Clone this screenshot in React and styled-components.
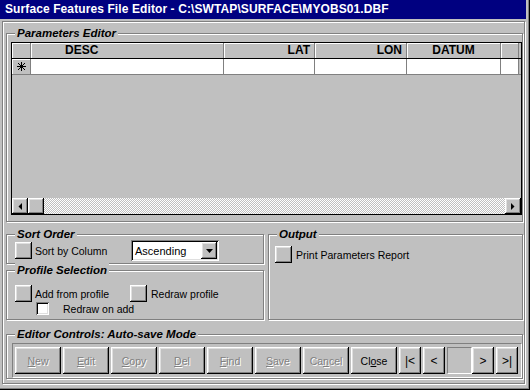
import React from "react";
import styled, { createGlobalStyle } from "styled-components";

const GlobalStyle = createGlobalStyle`
  html, body { margin: 0; padding: 0; background: #c0c0c0; }
  body { font-family: "Liberation Sans", Arial, sans-serif; }
`;

const raised = `
  box-shadow: inset -1px -1px 0 #000, inset 1px 1px 0 #fff,
    inset -2px -2px 0 #808080, inset 2px 2px 0 #dfdfdf;
`;

const Window = styled.div`
  width: 530px;
  height: 390px;
  box-sizing: border-box;
  background: #c0c0c0;
  display: flex;
  flex-direction: column;
  box-shadow: inset -1px -1px 0 #000, inset -2px -2px 0 #808080;
  font-family: "Liberation Sans", Arial, sans-serif;
  font-size: 10.5px;
  color: #000;
`;

const TitleBar = styled.div`
  width: 526px;
  height: 19px;
  box-sizing: border-box;
  padding-left: 5px;
  background: #000080;
  color: #fff;
  font-weight: bold;
  font-size: 12px;
  letter-spacing: 0.1px;
  line-height: 19px;
  white-space: nowrap;
`;

const Frame = styled.div`
  margin: 2px 0 0 2px;
  width: 523px;
  height: 363px;
  box-sizing: border-box;
  border: 1px solid #808080;
  box-shadow: inset 1px 1px 0 #fff, 1px 1px 0 #fff;
  padding: 11px 1px 0 3px;
  display: flex;
  flex-direction: column;
`;

const Group = styled.div`
  position: relative;
  box-sizing: border-box;
  border: 1px solid #808080;
  box-shadow: inset 1px 1px 0 #fff, 1px 1px 0 #fff;
  height: ${p => (p.$h ? `${p.$h}px` : "auto")};
  margin-top: ${p => p.$mt || 0}px;
  padding: ${p => p.$pad || "0"};
  flex: ${p => p.$flex || "none"};
`;

const Legend = styled.span`
  position: absolute;
  left: 8px;
  top: -8px;
  padding: 0 2px;
  background: #c0c0c0;
  font-weight: bold;
  font-style: italic;
  font-size: 11.5px;
  line-height: 14px;
  white-space: nowrap;
`;

/* ---------- data grid ---------- */

const cols = "19px 193px 91px 92px 94px 18px";

const Grid = styled.div`
  height: 173px;
  box-sizing: border-box;
  border: 1px solid #000;
  display: flex;
  flex-direction: column;
  background: #c0c0c0;
`;

const GridRow = styled.div`
  display: grid;
  grid-template-columns: ${cols};
  height: 15px;
  border-bottom: 1px solid ${p => (p.$head ? "#000" : "#808080")};
`;

const HeadCell = styled.div`
  box-sizing: border-box;
  border-right: 1px solid #808080;
  box-shadow: inset 1px 1px 0 #fff;
  font-weight: bold;
  font-size: 12px;
  line-height: 15px;
  text-align: ${p => p.$align || "center"};
  padding: ${p => p.$pad || "0 4px"};
  white-space: nowrap;
`;

const Cell = styled.div`
  box-sizing: border-box;
  border-right: 1px solid #808080;
  background: ${p => (p.$sel ? "#c0c0c0" : "#fff")};
  box-shadow: ${p => (p.$sel ? "inset 1px 1px 0 #fff" : "none")};
  display: flex;
  align-items: center;
  justify-content: center;
`;

const Filler = styled.div`
  flex: 1;
`;

const HScroll = styled.div`
  display: flex;
  height: 16px;
`;

const ScrollBtn = styled.div`
  width: 16px;
  height: 16px;
  box-sizing: border-box;
  background: #c0c0c0;
  ${raised}
  display: flex;
  align-items: center;
  justify-content: center;
`;

const Track = styled.div`
  flex: 1;
  background: repeating-conic-gradient(#c0c0c0 0 25%, #fff 0 50%) 0 0 / 2px 2px;
`;

/* ---------- controls ---------- */

const LowerRow = styled.div`
  display: flex;
  gap: 4px;
  margin-top: 12px;
`;

const LeftCol = styled.div`
  width: 258px;
  display: flex;
  flex-direction: column;
  gap: 6px;
`;

const Line = styled.div`
  display: flex;
  align-items: center;
  height: ${p => p.$h || 17}px;
  padding-left: ${p => p.$indent || 0}px;
`;

const Toggle = styled.div`
  width: 17px;
  height: 17px;
  box-sizing: border-box;
  background: #c0c0c0;
  ${raised}
  flex: none;
`;

const Label = styled.span`
  margin-left: ${p => p.$ml || 3}px;
  width: ${p => (p.$w ? `${p.$w}px` : "auto")};
  white-space: nowrap;
`;

const Check = styled.div`
  width: 13px;
  height: 13px;
  box-sizing: border-box;
  background: #fff;
  box-shadow: inset 1px 1px 0 #808080, inset -1px -1px 0 #fff,
    inset 2px 2px 0 #000, inset -2px -2px 0 #dfdfdf;
  flex: none;
`;

const Combo = styled.div`
  width: 88px;
  height: 21px;
  box-sizing: border-box;
  background: #fff;
  box-shadow: inset 1px 1px 0 #808080, inset -1px -1px 0 #fff,
    inset 2px 2px 0 #000, inset -2px -2px 0 #dfdfdf;
  display: flex;
  align-items: center;
  padding: 2px 2px 2px 4px;
  font-size: 11px;
`;

const ComboText = styled.span`
  flex: 1;
`;

const ComboBtn = styled(ScrollBtn)`
  width: 16px;
  height: 17px;
`;

const ButtonBar = styled.div`
  display: flex;
  align-items: center;
  box-sizing: border-box;
  height: 35px;
  border: 1px solid;
  border-color: #808080 #fff #fff #808080;
  padding: 0 2px;
  gap: 2px;
`;

const Btn = styled.button`
  width: ${p => p.$w || 46}px;
  height: 27px;
  padding: 0;
  border: none;
  background: #c0c0c0;
  ${raised}
  font-family: "Liberation Sans", Arial, sans-serif;
  font-size: ${p => (p.$nav ? 12 : 10.5)}px;
  color: ${p => (p.disabled ? "#808080" : "#000")};
  text-shadow: ${p => (p.disabled ? "1px 1px 0 #fff" : "none")};
  flex: none;
`;

const Field = styled.div`
  width: 25px;
  height: 27px;
  box-sizing: border-box;
  border: 1px solid;
  border-color: #808080 #fff #fff #808080;
  margin-right: -2px;
  flex: none;
`;

const Star = () => (
  <svg width="9" height="9" viewBox="0 0 9 9">
    <g stroke="#000" strokeWidth="1" shapeRendering="crispEdges">
      <line x1="4.5" y1="0" x2="4.5" y2="9" />
      <line x1="0" y1="4.5" x2="9" y2="4.5" />
      <line x1="1" y1="1" x2="8" y2="8" />
      <line x1="8" y1="1" x2="1" y2="8" />
    </g>
  </svg>
);

const Arrow = ({ dir }) => {
  const pts = {
    left: "4,0 4,7 0.5,3.5",
    right: "0,0 0,7 3.5,3.5",
    down: "0,0 7,0 3.5,4",
  }[dir];
  const w = dir === "down" ? 7 : 4;
  const h = dir === "down" ? 4 : 7;
  return (
    <svg width={w} height={h} viewBox={`0 0 ${w} ${h}`}>
      <polygon points={pts} fill="#000" />
    </svg>
  );
};

const ulStyle = { textDecoration: "underline" };

const editButtons = [
  ["", "N", "ew"],
  ["", "E", "dit"],
  ["", "C", "opy"],
  ["", "D", "el"],
  ["", "F", "ind"],
  ["", "S", "ave"],
  ["Ca", "n", "cel"],
];

export default function App() {
  return (
    <>
      <GlobalStyle />
      <Window>
        <TitleBar>Surface Features File Editor - C:\SWTAP\SURFACE\MYOBS01.DBF</TitleBar>
        <Frame>
          <Group $h={189} $pad="8px 0 0 4px">
            <Legend>Parameters Editor</Legend>
            <Grid>
              <GridRow $head>
                <HeadCell />
                <HeadCell $align="left" $pad="0 0 0 34px">DESC</HeadCell>
                <HeadCell $align="right">LAT</HeadCell>
                <HeadCell $align="right">LON</HeadCell>
                <HeadCell>DATUM</HeadCell>
                <HeadCell />
              </GridRow>
              <GridRow>
                <Cell $sel>
                  <Star />
                </Cell>
                <Cell />
                <Cell />
                <Cell />
                <Cell />
                <Cell />
              </GridRow>
              <Filler />
              <HScroll>
                <ScrollBtn>
                  <Arrow dir="left" />
                </ScrollBtn>
                <ScrollBtn />
                <Track />
                <ScrollBtn>
                  <Arrow dir="right" />
                </ScrollBtn>
              </HScroll>
            </Grid>
          </Group>

          <LowerRow>
            <LeftCol>
              <Group $h={30} $pad="5px 0 0 8px">
                <Legend>Sort Order</Legend>
                <Line $h={21}>
                  <Toggle />
                  <Label $w={96}>Sort by Column</Label>
                  <Combo>
                    <ComboText>Ascending</ComboText>
                    <ComboBtn>
                      <Arrow dir="down" />
                    </ComboBtn>
                  </Combo>
                </Line>
              </Group>
              <Group $h={50} $pad="14px 0 0 8px">
                <Legend>Profile Selection</Legend>
                <Line>
                  <Toggle />
                  <Label $w={95}>Add from profile</Label>
                  <Toggle />
                  <Label $ml={4}>Redraw profile</Label>
                </Line>
                <Line $h={13} $indent={21}>
                  <Check />
                  <Label $ml={14}>Redraw on add</Label>
                </Line>
              </Group>
            </LeftCol>
            <Group $flex="1" $pad="11px 0 0 6px">
              <Legend>Output</Legend>
              <Line>
                <Toggle />
                <Label $ml={4}>Print Parameters Report</Label>
              </Line>
            </Group>
          </LowerRow>

          <Group $h={45} $mt={14} $pad="8px 0 0 5px">
            <Legend>Editor Controls: Auto-save Mode</Legend>
            <ButtonBar>
              {editButtons.map(([a, u, b]) => (
                <Btn key={u + b} disabled>
                  {a}
                  <span style={ulStyle}>{u}</span>
                  {b}
                </Btn>
              ))}
              <Btn>
                Cl<span style={ulStyle}>o</span>se
              </Btn>
              <Btn $w={22} $nav>|&lt;</Btn>
              <Btn $w={22} $nav>&lt;</Btn>
              <Field />
              <Btn $w={22} $nav>&gt;</Btn>
              <Btn $w={22} $nav>&gt;|</Btn>
            </ButtonBar>
          </Group>
        </Frame>
      </Window>
    </>
  );
}
